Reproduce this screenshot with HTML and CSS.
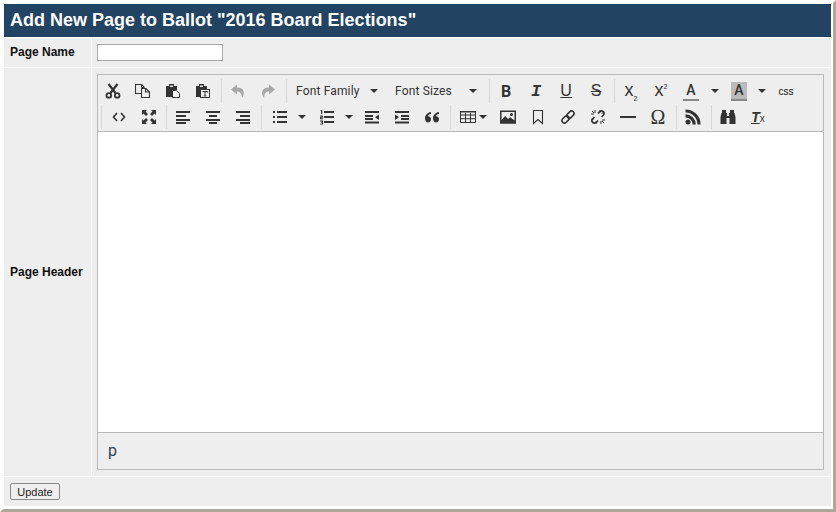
FILE: index.html
```html
<!DOCTYPE html>
<html lang="en">
<head>
<meta charset="utf-8">
<title>Add New Page</title>
<link rel="stylesheet" href="styles.css">
</head>
<body>
<svg class="defs" xmlns="http://www.w3.org/2000/svg">
<symbol id="i-cut" viewBox="0 0 16 16"><path d="M5.500 10 12.500 1M10.500 10 3.500 1" stroke="currentColor" stroke-width="2.200" fill="none"/><circle cx="3.800" cy="12.400" r="2.300" stroke="currentColor" stroke-width="1.800" fill="none"/><circle cx="12.200" cy="12.400" r="2.300" stroke="currentColor" stroke-width="1.800" fill="none"/></symbol>
<symbol id="i-copy" viewBox="0 0 16 16"><path d="M7 10.500H.500v-9h6v3M6.500 1.500l3 3M6.500 4.500h3M6.500 5.500h4.500l3.500 3.500v5.500h-8zM10.500 5.500v3.500h4" stroke="currentColor" stroke-width="1.100" fill="none"/></symbol>
<symbol id="i-paste" viewBox="0 0 16 16"><path d="M1 3h3V1h5v2h3v4H7v7H1z" fill="currentColor"/><path d="M7.500 7.500h4l3 3v4h-7z" stroke="currentColor" fill="#fff"/><rect x="5" y="2.500" width="3" height="1.500" fill="#eee"/></symbol>
<symbol id="i-pastetext" viewBox="0 0 16 16"><path d="M1 3h3V1h5v2h3v3H6v8H1z" fill="currentColor"/><rect x="5.500" y="6.500" width="9" height="8" stroke="currentColor" fill="#eee"/><path d="M7.500 8.500h5v1M10 8.500v4.500M8.800 13h2.400" stroke="currentColor" fill="none"/><rect x="5" y="2.500" width="3" height="1.500" fill="#eee"/></symbol>
<symbol id="i-undo" viewBox="0 0 16 16"><path d="M7 1.500 1 6.500 7 11.500V8.500c3 0 4.500 1.500 5 6.500C15 11 15 4.500 7 4.500z" fill="currentColor"/></symbol>
<symbol id="i-redo" viewBox="0 0 16 16"><path d="M9 1.500l6 5-6 5V8.500c-3 0-4.500 1.500-5 6.500C1 11 1 4.500 9 4.500z" fill="currentColor"/></symbol>
<symbol id="i-code" viewBox="0 0 16 16"><path d="M6 4 2.500 8 6 12M10 4l3.500 4L10 12" stroke="currentColor" stroke-width="1.600" fill="none"/></symbol>
<symbol id="i-full" viewBox="0 0 16 16"><path d="M1 1h5L4.500 2.500 7 5 5 7 2.500 4.500 1 6zM15 1v5l-1.500-1.500L11 7 9 5l2.500-2.500L10 1zM1 15v-5l1.500 1.500L5 9l2 2-2.500 2.500L6 15zM15 15h-5l1.500-1.500L9 11l2-2 2.500 2.500L15 10z" fill="currentColor"/></symbol>
<symbol id="i-left" viewBox="0 0 16 16"><path d="M1 2h14v2H1zM1 6h10v2H1zM1 10h14v2H1zM1 13h10v2H1z" fill="currentColor"/></symbol>
<symbol id="i-center" viewBox="0 0 16 16"><path d="M1 2h14v2H1zM4 6h8v2H4zM1 10h14v2H1zM4 13h8v2H4z" fill="currentColor"/></symbol>
<symbol id="i-right" viewBox="0 0 16 16"><path d="M1 2h14v2H1zM5 6h10v2H5zM1 10h14v2H1zM5 13h10v2H5z" fill="currentColor"/></symbol>
<symbol id="i-bul" viewBox="0 0 16 16"><path d="M5 2h10v2H5zM5 7h10v2H5zM5 12h10v2H5zM1 2h2v2H1zM1 7h2v2H1zM1 12h2v2H1z" fill="currentColor"/></symbol>
<symbol id="i-num" viewBox="0 0 16 16"><path d="M5 2h10v2H5zM5 7h10v2H5zM5 12h10v2H5z" fill="currentColor"/><path d="M2 1h1.200v4H2V2H1.200zM1 6.500h3v2.200H2.200v.6H4v.9H1V8h1.800v-.6H1zM1 11.500h3v4H1v-.8h1.800V14H1.800v-.6h1v-1H1z" fill="currentColor"/></symbol>
<symbol id="i-out" viewBox="0 0 16 16"><path d="M1 2h14v2H1zM1 6h8v2H1zM1 9h8v2H1zM1 12.500h14v2H1zM15 5.500v5.500l-4-2.700z" fill="currentColor"/></symbol>
<symbol id="i-ind" viewBox="0 0 16 16"><path d="M1 2h14v2H1zM7 6h8v2H7zM7 9h8v2H7zM1 12.500h14v2H1zM1 5.500v5.500l4-2.700z" fill="currentColor"/></symbol>
<symbol id="i-quote" viewBox="0 0 16 16"><path d="M7 3C3.500 3.500 1 6 1 9.500 1 11.800 2.300 13.500 4 13.500s3-1.500 3-3.300-1.300-3-3-3c0-1 1-2 3-2.200zM15 3c-3.500.5-6 3-6 6.500 0 2.300 1.300 4 3 4s3-1.500 3-3.300-1.300-3-3-3c0-1 1-2 3-2.200z" fill="currentColor"/></symbol>
<symbol id="i-table" viewBox="0 0 16 16"><path d="M.500 2.500h15v11H.500zM.500 6h15M.500 9.700h15M5.500 4v9.500M10.500 4v9.500" stroke="currentColor" fill="none"/><path d="M0 2h16v1.500H0z" fill="currentColor"/></symbol>
<symbol id="i-image" viewBox="0 0 16 16"><path d="M0 1.500h16v13H0zM1.500 3v8.300l3.700-4.300 2.800 3 2.200-1.800 4.300 3.300V3z" fill="currentColor" fill-rule="evenodd"/><path d="M0 13h16v1.500H0z" fill="currentColor"/><circle cx="11.500" cy="5.500" r="1.500" fill="currentColor"/></symbol>
<symbol id="i-mark" viewBox="0 0 16 16"><path d="M3.500 1.500h9v13L8 10.500 3.500 14.500z" stroke="currentColor" stroke-width="1.100" fill="none"/></symbol>
<symbol id="i-link" viewBox="0 0 16 16"><g transform="rotate(-45 8 8)" stroke="currentColor" stroke-width="1.600" fill="none"><rect x=".5" y="5.500" width="8" height="5" rx="2.500"/><rect x="7.500" y="5.500" width="8" height="5" rx="2.500"/></g></symbol>
<symbol id="i-unlink" viewBox="0 0 16 16"><g transform="rotate(-45 8 8)" stroke="currentColor" stroke-width="1.700" fill="none"><path d="M5.500 5.500H3a2.500 2.500 0 0 0 0 5h2.500M10.500 5.500H13a2.500 2.500 0 0 1 0 5h-2.500"/></g><path d="M1 5h3M5 1v3M11 12v3M12 11h3M2 2l2 2M12 12l2 2M10 1v2.500M14 3l-2.500 1.500M1.500 10H4M6 12.500V15" stroke="currentColor"/></symbol>
<symbol id="i-hr" viewBox="0 0 16 16"><path d="M0 7h16v2H0z" fill="currentColor"/></symbol>
<symbol id="i-rss" viewBox="0 0 16 16"><circle cx="3" cy="13" r="2.500" fill="currentColor"/><path d="M.500 6.800A8.700 8.700 0 0 1 9.200 15.500M.500 2A13.500 13.500 0 0 1 14 15.500" stroke="currentColor" stroke-width="3.200" fill="none"/></symbol>
<symbol id="i-find" viewBox="0 0 16 16"><path d="M2 1h4v3h1v3h2V4h1V1h4v3h.500l1 4v7H9.500V9h-3v6H.500V8l1-4H2z" fill="currentColor"/></symbol>
</svg>
<div class="frame">
  <h1 class="title">Add New Page to Ballot "2016 Board Elections"</h1>
  <div class="form">
    <div class="label label-name">Page Name</div>
    <div class="value name-cell"><input class="name-input" type="text"></div>
    <div class="label">Page Header</div>
    <div class="value">
      <div class="editor">
        <div class="toolbar">
          <div class="row">
            <div class="group first">
              <span class="btn"><svg class="ico"><use href="#i-cut"/></svg></span>
              <span class="btn"><svg class="ico"><use href="#i-copy"/></svg></span>
              <span class="btn"><svg class="ico"><use href="#i-paste"/></svg></span>
              <span class="btn"><svg class="ico"><use href="#i-pastetext"/></svg></span>
            </div>
            <div class="group">
              <span class="btn off"><svg class="ico"><use href="#i-undo"/></svg></span>
              <span class="btn off"><svg class="ico"><use href="#i-redo"/></svg></span>
            </div>
            <div class="group">
              <span class="list family">Font Family<i class="caret"></i></span>
              <span class="list sizes">Font Sizes<i class="caret"></i></span>
            </div>
            <div class="group">
              <span class="btn glyph bold">B</span>
              <span class="btn glyph ital">I</span>
              <span class="btn glyph under">U</span>
              <span class="btn glyph strike">S</span>
            </div>
            <div class="group">
              <span class="btn glyph script"><span>x<sub>2</sub></span></span>
              <span class="btn glyph script"><span>x<sup>2</sup></span></span>
              <span class="btn color"><span class="color-a">A</span></span><span class="split s18"><i class="caret"></i></span>
              <span class="btn color"><span class="color-a shade">A</span></span><span class="split s17"><i class="caret"></i></span>
              <span class="btn css">css</span>
            </div>
          </div>
          <div class="row">
            <div class="group">
              <span class="btn nudge"><svg class="ico"><use href="#i-code"/></svg></span>
              <span class="btn nudge"><svg class="ico"><use href="#i-full"/></svg></span>
            </div>
            <div class="group">
              <span class="btn"><svg class="ico"><use href="#i-left"/></svg></span>
              <span class="btn"><svg class="ico"><use href="#i-center"/></svg></span>
              <span class="btn"><svg class="ico"><use href="#i-right"/></svg></span>
            </div>
            <div class="group">
              <span class="btn bul"><svg class="ico"><use href="#i-bul"/></svg></span><span class="split s18"><i class="caret"></i></span>
              <span class="btn nudge"><svg class="ico"><use href="#i-num"/></svg></span><span class="split s16"><i class="caret"></i></span>
              <span class="btn"><svg class="ico"><use href="#i-out"/></svg></span>
              <span class="btn"><svg class="ico"><use href="#i-ind"/></svg></span>
              <span class="btn"><svg class="ico"><use href="#i-quote"/></svg></span>
            </div>
            <div class="group">
              <span class="btn tbl"><svg class="ico"><use href="#i-table"/></svg><i class="caret"></i></span>
              <span class="btn"><svg class="ico"><use href="#i-image"/></svg></span>
              <span class="btn"><svg class="ico"><use href="#i-mark"/></svg></span>
              <span class="btn"><svg class="ico"><use href="#i-link"/></svg></span>
              <span class="btn"><svg class="ico"><use href="#i-unlink"/></svg></span>
              <span class="btn"><svg class="ico"><use href="#i-hr"/></svg></span>
              <span class="btn glyph omega">Ω</span>
            </div>
            <div class="group">
              <span class="btn"><svg class="ico"><use href="#i-rss"/></svg></span>
            </div>
            <div class="group">
              <span class="btn"><svg class="ico"><use href="#i-find"/></svg></span>
              <span class="btn glyph clear"><span class="clear-t">T</span><small>x</small></span>
            </div>
          </div>
        </div>
        <div class="content"></div>
        <div class="status">p</div>
      </div>
    </div>
  </div>
  <div class="actions"><button class="update" type="button">Update</button></div>
</div>
</body>
</html>
```
FILE: styles.css
```css
* { box-sizing: border-box; }
html, body { margin: 0; padding: 0; background: #fff; }
body { font-family: "Liberation Sans", Arial, sans-serif; }
.defs { display: none; }
.frame {
  width: 836px; height: 512px;
  border-style: solid; border-width: 3px 3px 3px 3px;
  border-color: #fff #aca899 #aca899 #fff;
  padding: 1px 2px 3px 1px;
  display: flex; flex-direction: column; gap: 1px;
}
.title {
  margin: 0; height: 33px; padding: 0 6px;
  background: #224362; color: #fff;
  font-size: 18px; font-weight: bold; line-height: 33px;
}
.form {
  display: grid; grid-template-columns: 87px 739px; grid-template-rows: 29px 408px; gap: 1px;
}
.label {
  background: #eee; padding-left: 6px;
  display: flex; align-items: center;
  font-size: 12px; font-weight: bold; color: #111;
}
.label-name { padding-bottom: 1px; }
.value { background: #eee; padding: 6px 7px 6px 5px; }
.name-input {
  display: block; width: 126px; height: 17px; margin: 0; padding: 0 2px;
  border: 1px solid #aaa; background: #fff;
}
.editor {
  height: 396px; width: 727px;
  border: 1px solid #b9b9b9;
  display: flex; flex-direction: column; background: #fff;
}
.toolbar { height: 57px; background: #eee; padding-top: 3px; border-bottom: 1px solid #b9b9b9; }
.row { display: flex; height: 26px; }
.group { display: flex; align-items: center; height: 24px; margin: 1px 0 1px 3px; padding-left: 1px; border-left: 1px solid #d6d6d6; }
.group.first { margin-left: 0; padding-left: 0; border-left: 0; }
.btn {
  width: 30px; height: 24px; flex: none; color: #333;
  display: flex; align-items: center; justify-content: center;
}
.btn.off { color: #a8a8a8; }
.nudge { padding-left: 1px; }
.ico { width: 16px; height: 16px; display: block; }
.caret {
  display: block; width: 0; height: 0;
  border-style: solid; border-width: 4px 4px 0 4px;
  border-color: #333 transparent transparent transparent;
}
.split { height: 24px; display: flex; align-items: center; justify-content: center; flex: none; }
.s18 { width: 18px; }
.s17 { width: 16px; }
.s16 { width: 16px; }
.list {
  height: 24px; display: flex; align-items: center; justify-content: space-between; flex: none;
  padding: 0 8px; font-family: Roboto, sans-serif; font-size: 12px; letter-spacing: .15px; color: #333;
}
.family { width: 98px; padding-right: 8px; }
.sizes { width: 100px; padding-left: 9px; padding-right: 9px; }
.glyph { font-family: "Liberation Sans", sans-serif; font-size: 16px; }
.bold { font-family: Roboto, sans-serif; font-weight: 700; font-size: 16px; }
.ital { font-family: "Liberation Mono", monospace; font-style: italic; font-weight: bold; font-size: 17px; }
.under { text-decoration: underline; }
.strike { text-decoration: line-through; }
.script { font-size: 18px; line-height: 18px; padding-bottom: 3px; }
.script sub, .script sup { font-size: 7px; line-height: 0; }
.color-a {
  display: block; width: 16px; height: 19px; text-align: center;
  font-family: Roboto, sans-serif; font-weight: 500;
  font-size: 14px; line-height: 16px; color: #333; border-bottom: 2px solid #888;
}
.shade { background: #bbb; }
.css { font-size: 10px; width: 30px; margin-left: 1px; color: #111; }
.bul { padding-left: 4px; }
.tbl { width: 40px; justify-content: flex-start; gap: 3px; padding-left: 8px; }
.tbl + .btn { margin-left: 1px; }
.omega { font-family: "Liberation Serif", serif; font-size: 20px; }
.clear-t { font-style: italic; font-weight: bold; font-size: 14px; text-decoration: underline; }
.clear small { font-size: 10px; align-self: flex-end; margin: 0 0 5px 0; }
.content { flex: 1; background: #fff; }
.status {
  height: 37px; border-top: 1px solid #b9b9b9; background: #eee;
  padding: 0 0 2px 10px; display: flex; align-items: center;
  font-family: Roboto, sans-serif; font-size: 16px; color: #2f4252;
}
.actions { height: 29px; background: #eee; padding: 6px 6px; }
.update {
  display: block; width: 50px; height: 17px; margin: 0; padding: 0;
  border: 1px solid #8a8a8a; border-radius: 2px; background: #efefef;
  font-family: "Liberation Sans", Arial, sans-serif; font-size: 11px; color: #222;
}
```
